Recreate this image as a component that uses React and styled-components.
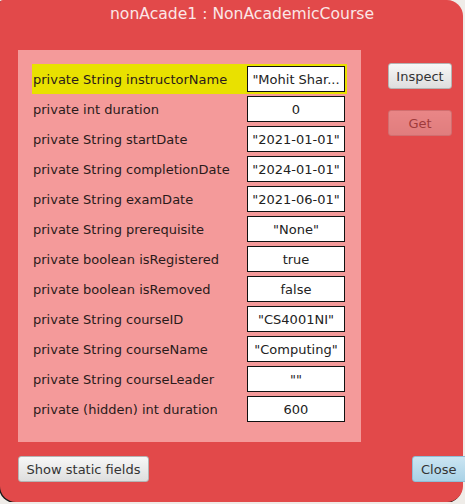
import React from 'react';
import styled, { createGlobalStyle, css } from 'styled-components';

const fields = [
	{ label: 'private String instructorName', value: '"Mohit Shar...', selected: true },
	{ label: 'private int duration', value: '0' },
	{ label: 'private String startDate', value: '"2021-01-01"' },
	{ label: 'private String completionDate', value: '"2024-01-01"' },
	{ label: 'private String examDate', value: '"2021-06-01"' },
	{ label: 'private String prerequisite', value: '"None"' },
	{ label: 'private boolean isRegistered', value: 'true' },
	{ label: 'private boolean isRemoved', value: 'false' },
	{ label: 'private String courseID', value: '"CS4001NI"' },
	{ label: 'private String courseName', value: '"Computing"' },
	{ label: 'private String courseLeader', value: '""' },
	{ label: 'private (hidden) int duration', value: '600' },
];

const App = () => {
	return (
		<>
			<GlobalStyle />
			<Window>
				<Title>nonAcade1 : NonAcademicCourse</Title>
				<Body>
					<FieldPanel>
						{fields.map((f) => (
							<FieldRow key={f.label} $selected={f.selected}>
								<Label>{f.label}</Label>
								<Value>{f.value}</Value>
							</FieldRow>
						))}
					</FieldPanel>
					<Side>
						<Button>Inspect</Button>
						<Button disabled>Get</Button>
					</Side>
				</Body>
				<Footer>
					<Button $wide>Show static fields</Button>
					<Button $primary>Close</Button>
				</Footer>
			</Window>
		</>
	);
};

export default App;

const GlobalStyle = createGlobalStyle`
	html, body {
		margin: 0;
		padding: 0;
		background: #efece8;
		overflow: hidden;
	}
	body {
		font-family: "DejaVu Sans", "Liberation Sans", sans-serif;
	}
`;

const Window = styled.div`
	width: 463px;
	height: 502px;
	background: #e2494a;
	border-radius: 3px 16px 16px 16px;
	box-shadow: -1px 1px 0 #1a1a1a;
	display: flex;
	flex-direction: column;
	position: relative;
`;

const Title = styled.div`
	height: 30px;
	line-height: 29px;
	padding-left: 21px;
	text-align: center;
	font-size: 15.6px;
	color: #fbe6e6;
`;

const Body = styled.div`
	display: flex;
	align-items: flex-start;
	padding: 20px 0 0 18px;
`;

const FieldPanel = styled.div`
	width: 343px;
	height: 392px;
	box-sizing: border-box;
	background: #f49a9a;
	padding: 14px 0 0 14px;
	display: flex;
	flex-direction: column;
`;

const FieldRow = styled.div`
	width: 315px;
	height: 30px;
	box-sizing: border-box;
	padding: 2px 2px 2px 1px;
	display: flex;
	align-items: center;
	justify-content: space-between;
	background: ${(p) => (p.$selected ? '#e9e100' : 'transparent')};
`;

const Label = styled.span`
	font-size: 13px;
	color: #2a1a1a;
`;

const Value = styled.div`
	width: 98px;
	height: 26px;
	box-sizing: border-box;
	border: 1px solid #111;
	background: #fff;
	font-size: 13px;
	color: #222;
	display: flex;
	align-items: center;
	justify-content: center;
	white-space: nowrap;
	overflow: hidden;
`;

const Side = styled.div`
	margin-left: 27px;
	padding-top: 13px;
	display: flex;
	flex-direction: column;
	gap: 21px;
`;

const Button = styled.button`
	width: 64px;
	height: 26px;
	padding: 0;
	font-family: "DejaVu Sans", "Liberation Sans", sans-serif;
	font-size: 13px;
	color: #333;
	border: 1px solid #b4b4b4;
	border-radius: 3px;
	background: linear-gradient(#f7f7f7, #dedede);

	&:disabled {
		opacity: 0.35;
		color: #222;
	}

	${(p) =>
		p.$wide &&
		css`
			width: 131px;
		`}

	${(p) =>
		p.$primary &&
		css`
			width: 62px;
			text-align: left;
			padding-left: 8px;
			border-color: #8fbdd6;
			background: linear-gradient(#cbe5f2, #a9d2e6);
		`}
`;

const Footer = styled.div`
	display: flex;
	justify-content: space-between;
	padding: 14px 0 0 18px;
	margin-right: -11px;
`;
